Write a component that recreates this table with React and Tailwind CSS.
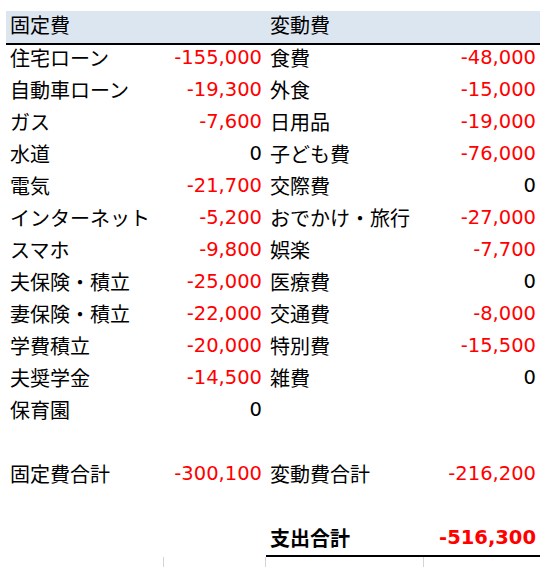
const fixed = [
    ['住宅ローン', '-155,000'],
    ['自動車ローン', '-19,300'],
    ['ガス', '-7,600'],
    ['水道', '0'],
    ['電気', '-21,700'],
    ['インターネット', '-5,200'],
    ['スマホ', '-9,800'],
    ['夫保険・積立', '-25,000'],
    ['妻保険・積立', '-22,000'],
    ['学費積立', '-20,000'],
    ['夫奨学金', '-14,500'],
    ['保育園', '0'],
];

const variable = [
    ['食費', '-48,000'],
    ['外食', '-15,000'],
    ['日用品', '-19,000'],
    ['子ども費', '-76,000'],
    ['交際費', '0'],
    ['おでかけ・旅行', '-27,000'],
    ['娯楽', '-7,700'],
    ['医療費', '0'],
    ['交通費', '-8,000'],
    ['特別費', '-15,500'],
    ['雑費', '0'],
    ['', ''],
];

function Label({ children, bold }) {
    return (
        <div className={`h-8 leading-[26px] px-1 whitespace-nowrap ${bold ? 'font-bold' : ''}`}>
            {children}
        </div>
    );
}

function Amount({ value, bold }) {
    const neg = value.startsWith('-');
    return (
        <div
            className={`h-8 leading-[26px] text-right pl-1 pr-[4px] whitespace-nowrap text-[19.5px] font-['DejaVu_Sans',sans-serif] ${neg ? 'text-[#ff0000]' : 'text-black'} ${bold ? 'font-bold' : ''}`}
        >
            {value}
        </div>
    );
}

export default function App() {
    return (
        <div
            className="w-[546px] h-[567px] bg-white text-black text-[20px] pt-[11px] overflow-hidden"
            style={{ fontFamily: '"Noto Sans CJK JP", "Noto Sans", sans-serif' }}
        >
            <div className="ml-[6px] w-[534px] grid grid-cols-[158px_102px_158px_116px]">
                {/* header */}
                <div className="col-span-2 h-[34px] leading-[28px] px-1 bg-[#dce6f1] border-b-2 border-black">固定費</div>
                <div className="col-span-2 h-[34px] leading-[28px] px-1 bg-[#dce6f1] border-b-2 border-black">変動費</div>

                {fixed.map(([label, value], i) => (
                    <div key={label} className="contents">
                        <Label>{label}</Label>
                        <Amount value={value} />
                        <Label>{variable[i][0]}</Label>
                        <Amount value={variable[i][1]} />
                    </div>
                ))}

                <div className="col-span-4 h-8" />

                <Label>固定費合計</Label>
                <Amount value="-300,100" />
                <Label>変動費合計</Label>
                <Amount value="-216,200" />

                <div className="col-span-4 h-8" />

                <div className="col-span-2" />
                <div className="col-span-2 h-8 grid grid-cols-[158px_116px] border-b-2 border-black">
                    <Label bold>支出合計</Label>
                    <Amount value="-516,300" bold />
                </div>

                <div className="h-3 border-r border-[#d4d4d4]" />
                <div className="h-3 border-r border-[#d4d4d4]" />
                <div className="h-3 border-r border-[#d4d4d4]" />
                <div className="h-3" />
            </div>
        </div>
    );
}
